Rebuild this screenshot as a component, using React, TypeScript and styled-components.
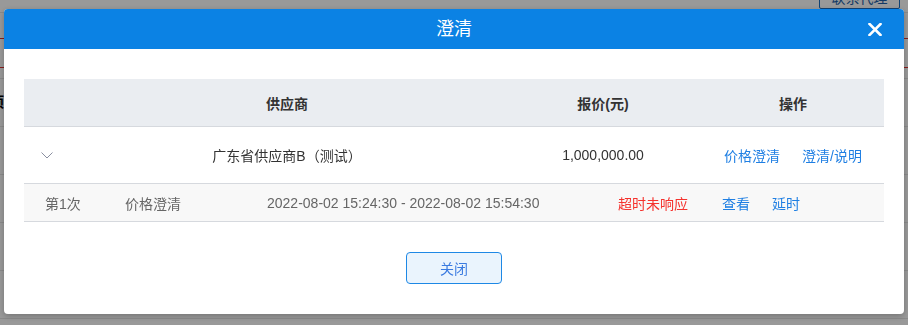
import styled, { createGlobalStyle } from "styled-components";

const GlobalStyle = createGlobalStyle`
  html, body {
    margin: 0;
    padding: 0;
    background: #ffffff;
  }
  body {
    font-family: "Liberation Sans", "Noto Sans CJK SC", Arial, sans-serif;
    font-size: 14px;
    color: #333333;
  }
`;

const App = () => {
  return (
    <>
      <GlobalStyle />
      <Page>
        <TopBar>
          <TopButton>联系代理</TopButton>
        </TopBar>
        <AlertBox />
        <BgTable>
          <BgHead>项目名称</BgHead>
          <BgRow />
          <BgRow />
          <BgRow />
          <BgRow />
        </BgTable>
      </Page>
      <Overlay>
        <Modal>
          <ModalHeader>
            <Title>澄清</Title>
            <CloseButton aria-label="关闭">
              <svg width="14" height="13" viewBox="0 0 14 13">
                <path
                  d="M1.5 1 L12.5 12 M12.5 1 L1.5 12"
                  stroke="#ffffff"
                  strokeWidth="2.6"
                  strokeLinecap="square"
                />
              </svg>
            </CloseButton>
          </ModalHeader>
          <ModalBody>
            <Table>
              <HeadRow>
                <HeadCell />
                <HeadCell>供应商</HeadCell>
                <HeadCell>报价(元)</HeadCell>
                <HeadCell>操作</HeadCell>
              </HeadRow>
              <MainRow>
                <Cell>
                  <svg width="12" height="7" viewBox="0 0 12 7">
                    <path
                      d="M0.5 0.5 L6 6 L11.5 0.5"
                      fill="none"
                      stroke="#8a8fa0"
                      strokeWidth="1"
                    />
                  </svg>
                </Cell>
                <Cell>广东省供应商B（测试）</Cell>
                <Cell>1,000,000.00</Cell>
                <Cell>
                  <Actions>
                    <LinkText>价格澄清</LinkText>
                    <LinkText>澄清/说明</LinkText>
                  </Actions>
                </Cell>
              </MainRow>
              <SubRow>
                <SubCell>第1次</SubCell>
                <SubCell>价格澄清</SubCell>
                <SubCell>2022-08-02 15:24:30 - 2022-08-02 15:54:30</SubCell>
                <SubCell $status="danger">超时未响应</SubCell>
                <SubCell>
                  <Actions>
                    <LinkText>查看</LinkText>
                    <LinkText>延时</LinkText>
                  </Actions>
                </SubCell>
              </SubRow>
            </Table>
            <Footer>
              <CloseBtn>关闭</CloseBtn>
            </Footer>
          </ModalBody>
        </Modal>
      </Overlay>
    </>
  );
};

export default App;

const Page = styled.div`
  height: 325px;
  overflow: hidden;
`;

const TopBar = styled.div`
  height: 12px;
  display: flex;
  justify-content: flex-end;
  padding-right: 8px;
  border-bottom: 1px solid #e6e6e6;
`;

const TopButton = styled.div`
  width: 81px;
  height: 22px;
  margin-top: -13px;
  box-sizing: border-box;
  border: 1px solid #1e6fc0;
  border-radius: 2px;
  font-size: 14px;
  line-height: 20px;
  text-align: center;
  color: #1e5fa8;
`;

const AlertBox = styled.div`
  margin-top: 25px;
  height: 28px;
  border-top: 1px solid #e03030;
  border-bottom: 1px solid #e03030;
`;

const BgTable = styled.div`
  margin-top: 10px;
  border-top: 1px solid #e6e6e6;
`;

const BgHead = styled.div`
  height: 47px;
  border-bottom: 1px solid #e6e6e6;
  margin-left: -10px;
  font-weight: bold;
  line-height: 47px;
  color: #000;
`;

const BgRow = styled.div`
  height: 47px;
  border-bottom: 1px solid #e6e6e6;
`;

const Overlay = styled.div`
  position: fixed;
  inset: 0;
  background: rgba(0, 0, 0, 0.4);
  display: flex;
  justify-content: center;
  align-items: flex-start;
  padding-top: 9px;
`;

const Modal = styled.div`
  width: 900px;
  background: #ffffff;
  border-radius: 4px;
  overflow: hidden;
  box-shadow: 0 2px 6px rgba(0, 0, 0, 0.25);
`;

const ModalHeader = styled.div`
  position: relative;
  height: 40px;
  background: #0b82e4;
  display: flex;
  align-items: center;
  justify-content: center;
`;

const Title = styled.div`
  font-size: 18px;
  color: #ffffff;
  line-height: 40px;
`;

const CloseButton = styled.div`
  position: absolute;
  right: 22px;
  top: 14px;
  width: 14px;
  height: 13px;
  display: flex;
`;

const ModalBody = styled.div`
  padding: 30px 20px 30px;
`;

const Table = styled.div`
  width: 860px;
`;

const HeadRow = styled.div`
  display: grid;
  grid-template-columns: 46px 434px 198px 182px;
  height: 47px;
  background: #eaedf1;
  border-bottom: 1px solid #d6d9de;
`;

const HeadCell = styled.div`
  display: flex;
  align-items: center;
  justify-content: center;
  font-weight: bold;
  color: #333333;
`;

const MainRow = styled.div`
  display: grid;
  grid-template-columns: 46px 434px 198px 182px;
  height: 56px;
  border-bottom: 1px solid #d6d9de;
`;

const Cell = styled.div`
  display: flex;
  align-items: center;
  justify-content: center;
  color: #333333;
`;

const Actions = styled.div`
  display: flex;
  gap: 22px;
`;

const LinkText = styled.span`
  color: #1f7fe3;
  cursor: pointer;
`;

const SubRow = styled.div`
  display: grid;
  grid-template-columns: 80px 142px 351px 104px 1fr;
  height: 37px;
  padding-left: 21px;
  background: #f8f8f8;
  border-bottom: 1px solid #d6d9de;
`;

const SubCell = styled.div<{ $status?: "danger" }>`
  display: flex;
  align-items: center;
  color: ${(p) => (p.$status === "danger" ? "#f5322d" : "#666666")};
`;

const Footer = styled.div`
  display: flex;
  justify-content: center;
  padding-top: 30px;
`;

const CloseBtn = styled.div`
  width: 96px;
  height: 32px;
  box-sizing: border-box;
  border: 1px solid #1e88e5;
  border-radius: 4px;
  background: #eaf4fd;
  color: #3b7be0;
  font-size: 14px;
  display: flex;
  align-items: center;
  justify-content: center;
`;
